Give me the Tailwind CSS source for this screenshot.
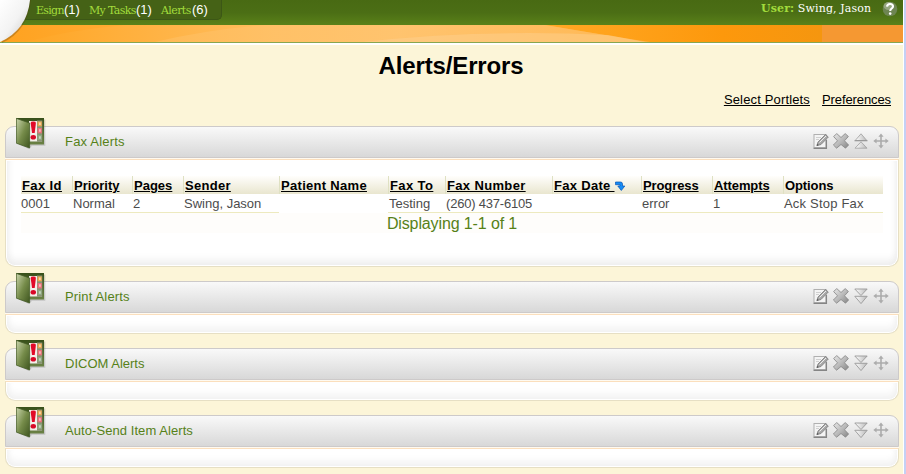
<!DOCTYPE html>
<html lang="en">
<head>
<meta charset="utf-8">
<title>Alerts/Errors</title>
<script src="https://cdn.jsdelivr.net/npm/@tailwindcss/browser@4"></script>
</head>
<body class="relative h-[474px] w-[906px] overflow-hidden bg-[#fcf5d8] font-['Liberation_Sans',Arial,sans-serif] text-[13px] text-black">
<svg width="0" height="0" class="absolute" aria-hidden="true">
  <defs>
    <linearGradient id="cover" x1="0" y1="0" x2="1" y2="1"><stop offset="0" stop-color="#c9d4ac"/><stop offset=".5" stop-color="#768c4a"/><stop offset="1" stop-color="#3e551f"/></linearGradient>
    <linearGradient id="back" x1="0" y1="0" x2="0" y2="1"><stop offset="0" stop-color="#38501a"/><stop offset="1" stop-color="#6b8245"/></linearGradient>
    <linearGradient id="metal" x1="0" y1="0" x2="1" y2="1"><stop offset="0" stop-color="#e9e9e9"/><stop offset=".55" stop-color="#b6b6b6"/><stop offset="1" stop-color="#858585"/></linearGradient>
    <linearGradient id="tri" x1="0" y1="0" x2="1" y2="0"><stop offset="0" stop-color="#fff"/><stop offset="1" stop-color="#b9b9b9"/></linearGradient>
    <symbol id="book" viewBox="0 0 32 34">
      <path d="M3 2.5H29.3V28.8H16L13 32L3 27.5Z" fill="#777" opacity=".3"/>
      <path d="M0 1H28V27.5H13Z" fill="url(#back)"/>
      <path d="M13 4H26V24.5H13Z" fill="#f3efe9"/>
      <path d="M21 3.5h5.3v21.3H21z" fill="#8a9474"/>
      <path d="M21.6 4.5h4.2v4.8h-4.2z" fill="#eda84e"/><path d="M21.6 11h4.2v5.3h-4.2z" fill="#ee6f7a"/><path d="M21.6 18h4.2v5h-4.2z" fill="#90a983"/>
      <path d="M23 5.5h1.8v2.6H23zM23 12.2h1.8v2.6H23zM23 19.2h1.8v2.6H23z" fill="#fff" opacity=".5"/>
      <path d="M14.7 6Q14.6 4.6 17.3 4.6Q20 4.6 19.9 6L18.7 16H16Z" fill="#e20a28"/><ellipse cx="17.3" cy="20.3" rx="2.7" ry="2.3" fill="#d80826"/>
      <path d="M.4 1.4L13.6 6V31L.4 26.2Z" fill="url(#cover)" stroke="#465d28" stroke-width=".8"/>
    </symbol>
    <symbol id="edit" viewBox="0 0 16 16">
      <rect x="1" y="1.5" width="12" height="13" fill="#f4f4f4" stroke="#b0b0b0"/>
      <path d="M.5 15.3H13.4V7" fill="none" stroke="#858585" stroke-width="1.3"/>
      <path d="M3 4.5h5M3 6.5h3" stroke="#d0d0d0"/>
      <path d="M3.8 12.7L5 9L12.5 1.5L15.3 4L8 11.5Z" fill="#a8a8a8" stroke="#7b7b7b" stroke-width=".8"/><path d="M6.5 9.5L13 3" stroke="#eee"/><path d="M3.8 12.7l.6-1.8 1.3 1.2z" fill="#444"/>
    </symbol>
    <symbol id="close" viewBox="0 0 16 16"><path d="M.6 3.5L3.8 .6L8 4.5L12.2 .6L15.4 3.5L11.5 7.8L15.6 12L12.5 15.2L8 11.5L3.6 15.2L.4 12L4.5 7.8Z" fill="url(#metal)" stroke="#858585" stroke-width=".8"/></symbol>
    <symbol id="up" viewBox="0 0 16 16"><path d="M8 .8L13.8 7.5H2.2Z" fill="url(#tri)" stroke="#a0a0a0" stroke-width=".8"/><path d="M1.5 7.8H14.5" stroke="#8d8d8d" stroke-width=".9"/><path d="M8 8.8L14 15.2H2Z" fill="url(#tri)" stroke="#a0a0a0" stroke-width=".8"/></symbol>
    <symbol id="down" viewBox="0 0 16 16"><path d="M1.8 1H14.2L8 7.5Z" fill="url(#tri)" stroke="#999" stroke-width=".9"/><path d="M1.8 8.3H14.2L8 15.6Z" fill="url(#tri)" stroke="#999" stroke-width=".9"/></symbol>
    <symbol id="move" viewBox="0 0 16 16"><path d="M8 .5L10.6 3.8H8.8V7.3H12.4V5.5L15.7 8L12.4 10.5V8.7H8.8V12.2H10.6L8 15.5L5.4 12.2H7.2V8.7H3.6V10.5L.3 8L3.6 5.5V7.3H7.2V3.8H5.4Z" fill="#acacac"/></symbol>
  </defs>
</svg>

<header class="relative h-[46px] w-[903px]">
  <div class="flex h-[25px] justify-between bg-linear-to-b from-[#486a13] via-[#4b6e15] to-[#5a8119] font-['DejaVu_Serif',serif] text-[11px]">
    <nav class="flex h-[20px] w-[222px] gap-[9px] rounded-br-[5px] border-r border-b border-[#3c5716] bg-[#456216] pl-9 leading-[21px] text-[#a2dc3c]">
      <a class="flex w-[44px] whitespace-nowrap"><span class="w-[28px] tracking-[-0.7px]">Esign</span><span class="font-['Liberation_Sans',sans-serif] text-[13px] text-white leading-[19px]">(1)</span></a>
      <a class="flex w-[63px] whitespace-nowrap"><span class="w-[47px] tracking-[-0.65px]">My Tasks</span><span class="font-['Liberation_Sans',sans-serif] text-[13px] text-white leading-[19px]">(1)</span></a>
      <a class="flex whitespace-nowrap"><span class="w-[31px] tracking-[-0.6px]">Alerts</span><span class="font-['Liberation_Sans',sans-serif] text-[13px] text-white leading-[19px]">(6)</span></a>
    </nav>
    <div class="flex h-[17px] items-center gap-[9px] pr-[5px] whitespace-nowrap">
      <div class="w-[112px] pt-[2px] tracking-[0.12px] text-white"><b class="text-[#a2dc3c]">User:</b> Swing, Jason</div>
      <svg class="mt-px shrink-0" width="16" height="16" viewBox="0 0 16 16"><circle cx="8" cy="8" r="7.3" fill="#6e8552"/><ellipse cx="6.5" cy="5" rx="5" ry="4" fill="#a6b394" opacity=".7"/><path d="M5 5.6Q5.3 3 8 3Q11 3 11 5.5C11 7.6 8.2 7.5 8.2 10" fill="none" stroke="#fff" stroke-width="2.1"/><circle cx="8.2" cy="12.6" r="1.3" fill="#fff"/></svg>
    </div>
  </div>
  <svg class="block" width="903" height="17" viewBox="0 0 903 17">
    <defs>
      <linearGradient id="base"><stop offset="0" stop-color="#ffa21f"/><stop offset=".3" stop-color="#ffb64c"/><stop offset=".65" stop-color="#ffa51f"/><stop offset=".8" stop-color="#fd980c"/><stop offset=".91" stop-color="#f5960f"/></linearGradient>
      <linearGradient id="swoop"><stop offset="0" stop-color="#ffa625"/><stop offset=".4" stop-color="#ffbe60"/><stop offset="1" stop-color="#ffb54d"/></linearGradient>
      <linearGradient id="sheen"><stop offset="0" stop-color="#ffbd5d"/><stop offset=".5" stop-color="#ffc777"/><stop offset="1" stop-color="#ffb955"/></linearGradient>
    </defs>
    <rect width="903" height="17" fill="url(#base)"/>
    <path d="M25 17Q70 5 125 0H545Q610 11 650 17Z" fill="url(#swoop)"/>
    <path d="M155 17Q205 5 265 0H545Q610 11 645 17Z" fill="url(#sheen)" opacity=".7"/>
    <path d="M362 17Q480 4 608 10L645 17Z" fill="#fdd08d" opacity=".5"/>
    <rect x="822" width="81" height="17" fill="#f59832"/>
  </svg>
  <div class="h-px bg-[#87a650]"></div>
  <div class="h-[2px] bg-white"></div>
  <svg class="absolute top-0 left-0" width="34" height="44" viewBox="0 0 34 44">
    <defs><linearGradient id="disc" x1="0" y1="0" x2="1" y2="1"><stop offset="0" stop-color="#fff"/><stop offset=".5" stop-color="#f3f3f3"/><stop offset=".8" stop-color="#d7d7d7"/></linearGradient></defs>
    <path d="M0 0H31Q28 31 2 43Z" fill="#573f10" opacity=".3"/>
    <path d="M0 0H30Q27 30 0 42Z" fill="url(#disc)"/>
  </svg>
</header>

<main class="w-[903px] pr-1 pl-[5px]">
  <h1 class="h-[46px] pt-[6px] pr-[2px] text-center text-[24px] leading-[28px] font-bold tracking-[-0.13px]">Alerts/Errors</h1>
  <div class="flex h-[34px] justify-end gap-3 pr-2 leading-[16px] underline underline-offset-1"><a class="tracking-[0.15px]">Select Portlets</a><a class="tracking-[-0.1px]">Preferences</a></div>

  <section class="mb-[14px] h-[141px]">
    <div class="relative mb-px flex h-[32px] items-center justify-between rounded-t-[9px] border border-[#cdcaca] bg-linear-to-b from-[#f9f9f9] to-[#d8d8d8] pr-[9px] pl-[59px] shadow-[0_1px_0_#fffaf0]">
      <svg class="absolute -top-[10px] left-[10px]" width="32" height="34"><use href="#book"/></svg>
      <h2 class="text-[#568118] tracking-[0.2px]">Fax Alerts</h2>
      <div class="flex gap-1 pb-[2px]"><svg width="16" height="16"><use href="#edit"/></svg><svg width="16" height="16"><use href="#close"/></svg><svg width="16" height="16"><use href="#up"/></svg><svg width="16" height="16"><use href="#move"/></svg></div>
    </div>
    <div class="h-[108px] rounded-b-[10px] border border-[#e6dfc4] border-t-[#fbdfbd] bg-white px-[15px] pt-[16px] shadow-[inset_0_0_0_1px_white,inset_0_-9px_10px_-4px_#ececec,inset_7px_0_7px_-5px_#ececec,inset_-7px_0_7px_-5px_#ececec]">
      <table class="w-[862px] table-fixed border-separate border-spacing-0 text-left whitespace-nowrap">
        <colgroup><col class="w-[51px]"><col class="w-[60px]"><col class="w-[51px]"><col class="w-[96px]"><col class="w-[109px]"><col class="w-[57px]"><col class="w-[107px]"><col class="w-[89px]"><col class="w-[71px]"><col class="w-[71px]"><col class="w-[100px]"></colgroup>
        <thead>
          <tr class="h-[18px] bg-linear-to-b from-[#fffefc] to-[#e9e6cf] leading-[16px] [&>th]:p-0 [&>th]:pt-[2px] [&>th]:pl-px [&>th+th]:bg-[linear-gradient(#dfe1c3,#dfe1c3)] [&>th+th]:bg-[length:1px_18px] [&>th+th]:bg-no-repeat [&>th+th]:pl-[2px]">
            <th class="tracking-[0.4px]"><u>Fax Id</u></th><th><u>Priority</u></th><th><u>Pages</u></th><th class="tracking-[0.3px]"><u>Sender</u></th><th class="tracking-[0.3px]"><u>Patient Name</u></th><th class="tracking-[0.4px]"><u>Fax To</u></th><th class="tracking-[0.35px]"><u>Fax Number</u></th><th class="tracking-[0.3px]"><u>Fax Date </u><svg class="inline align-[-1px]" width="10" height="10" viewBox="0 0 10 10"><path d="M.5 1H5.5Q7.5 1 7.5 3V5H9.8L6.3 9.5L2.8 5H5V3.7H.5Z" fill="#168cf5" stroke="#0754b5" stroke-width=".7"/></svg></th><th class="tracking-[-0.1px]"><u>Progress</u></th><th class="tracking-[-0.1px]"><u>Attempts</u></th><th class="tracking-[-0.1px]">Options</th>
          </tr>
        </thead>
        <tbody>
          <tr class="h-[19px] leading-[17px] text-[#4c4c4c] [&>td]:border-b [&>td]:border-[#edeabf] [&>td]:p-0 [&>td]:pt-px [&>td+td]:pl-px">
            <td>0001</td><td>Normal</td><td>2</td><td>Swing, Jason</td><td class="border-b-0!"></td><td>Testing</td><td class="tracking-[-0.2px]">(260) 437-6105</td><td></td><td>error</td><td>1</td><td class="tracking-[0.2px]">Ack Stop Fax</td>
          </tr>
        </tbody>
        <tfoot><tr class="h-[20px] bg-[#fefdfb]"><td colspan="11" class="p-0 pt-[2px] text-center text-[16px] leading-[18px] tracking-[-0.12px] text-[#568118]">Displaying 1-1 of 1</td></tr></tfoot>
      </table>
    </div>
  </section>

  <section class="mb-[14px] h-[53px]">
    <div class="relative mb-px flex h-[32px] items-center justify-between rounded-t-[9px] border border-[#cdcaca] bg-linear-to-b from-[#f9f9f9] to-[#d8d8d8] pr-[9px] pl-[59px] shadow-[0_1px_0_#fffaf0]">
      <svg class="absolute -top-[10px] left-[10px]" width="32" height="34"><use href="#book"/></svg>
      <h2 class="text-[#568118] tracking-[0.15px]">Print Alerts</h2>
      <div class="flex gap-1 pb-[2px]"><svg width="16" height="16"><use href="#edit"/></svg><svg width="16" height="16"><use href="#close"/></svg><svg width="16" height="16"><use href="#down"/></svg><svg width="16" height="16"><use href="#move"/></svg></div>
    </div>
    <div class="h-[20px] rounded-b-[10px] border border-[#e6dfc4] border-t-[#fbdfbd] bg-white shadow-[inset_0_0_0_1px_white,inset_0_-9px_10px_-4px_#f0f0f0,inset_7px_0_7px_-5px_#f0f0f0,inset_-7px_0_7px_-5px_#f0f0f0]"></div>
  </section>

  <section class="mb-[14px] h-[53px]">
    <div class="relative mb-px flex h-[32px] items-center justify-between rounded-t-[9px] border border-[#cdcaca] bg-linear-to-b from-[#f9f9f9] to-[#d8d8d8] pr-[9px] pl-[59px] shadow-[0_1px_0_#fffaf0]">
      <svg class="absolute -top-[10px] left-[10px]" width="32" height="34"><use href="#book"/></svg>
      <h2 class="text-[#568118]">DICOM Alerts</h2>
      <div class="flex gap-1 pb-[2px]"><svg width="16" height="16"><use href="#edit"/></svg><svg width="16" height="16"><use href="#close"/></svg><svg width="16" height="16"><use href="#down"/></svg><svg width="16" height="16"><use href="#move"/></svg></div>
    </div>
    <div class="h-[20px] rounded-b-[10px] border border-[#e6dfc4] border-t-[#fbdfbd] bg-white shadow-[inset_0_0_0_1px_white,inset_0_-9px_10px_-4px_#f0f0f0,inset_7px_0_7px_-5px_#f0f0f0,inset_-7px_0_7px_-5px_#f0f0f0]"></div>
  </section>

  <section class="h-[53px]">
    <div class="relative mb-px flex h-[32px] items-center justify-between rounded-t-[9px] border border-[#cdcaca] bg-linear-to-b from-[#f9f9f9] to-[#d8d8d8] pr-[9px] pl-[59px] shadow-[0_1px_0_#fffaf0]">
      <svg class="absolute -top-[10px] left-[10px]" width="32" height="34"><use href="#book"/></svg>
      <h2 class="text-[#568118] tracking-[0.07px]">Auto-Send Item Alerts</h2>
      <div class="flex gap-1 pb-[2px]"><svg width="16" height="16"><use href="#edit"/></svg><svg width="16" height="16"><use href="#close"/></svg><svg width="16" height="16"><use href="#down"/></svg><svg width="16" height="16"><use href="#move"/></svg></div>
    </div>
    <div class="h-[20px] rounded-b-[10px] border border-[#e6dfc4] border-t-[#fbdfbd] bg-white shadow-[inset_0_0_0_1px_white,inset_0_-9px_10px_-4px_#f0f0f0,inset_7px_0_7px_-5px_#f0f0f0,inset_-7px_0_7px_-5px_#f0f0f0]"></div>
  </section>
</main>
<div class="absolute top-0 right-0 h-full w-[3px] border-r-2 border-[#c5d0f4] bg-white"></div>
</body>
</html>
